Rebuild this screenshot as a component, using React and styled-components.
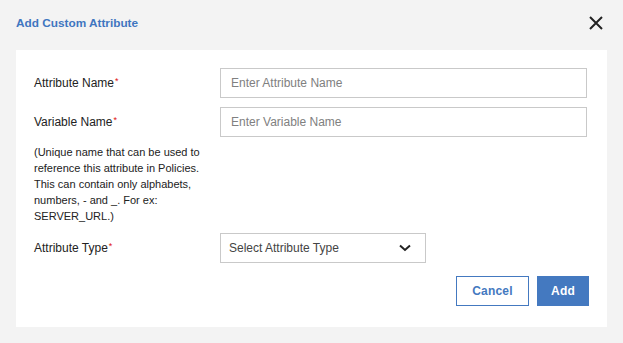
import React from "react";
import styled, { createGlobalStyle } from "styled-components";

const Global = createGlobalStyle`
  html, body { margin: 0; padding: 0; background: #f3f3f3; }
  body { font-family: "Liberation Sans", Arial, sans-serif; }
  * { box-sizing: border-box; }
`;

const Dialog = styled.div`
  width: 623px;
  min-height: 343px;
  background: #f3f3f3;
  padding: 0 16px 16px 16px;
  display: flex;
  flex-direction: column;
`;

const Header = styled.div`
  flex: none;
  height: 50px;
  display: flex;
  align-items: center;
  justify-content: space-between;
  padding-bottom: 5px;
`;

const Title = styled.h2`
  margin: 0;
  font-size: 11.8px;
  font-weight: bold;
  color: #3f76c0;
`;

const CloseButton = styled.button`
  border: 0;
  background: none;
  padding: 0;
  margin-right: 3px;
  width: 16px;
  height: 16px;
  display: flex;
  align-items: center;
  justify-content: center;
  cursor: pointer;
`;

const Panel = styled.div`
  flex: none;
  background: #fff;
  width: 591px;
  padding: 18px 20px 21px 18px;
  display: flex;
  flex-direction: column;
  gap: 9px;
`;

const Row = styled.div`
  display: flex;
  align-items: flex-start;
`;

const LabelCol = styled.div`
  width: 186px;
  flex: none;
  padding-top: 6px;
  display: flex;
  flex-direction: column;
`;

const Label = styled.label`
  font-size: 12px;
  line-height: 14px;
  color: #222;
`;

const Req = styled.span`
  color: #e01010;
  font-size: 9px;
  vertical-align: 3px;
  margin-left: 1px;
`;

const Help = styled.p`
  margin: 15px 0 0 0;
  font-size: 11px;
  line-height: 16px;
  color: #222;
  width: 180px;
`;

const Input = styled.input`
  flex: 1;
  height: 30px;
  border: 1px solid #c9c9c9;
  padding: 0 10px;
  font-family: inherit;
  font-size: 12px;
  color: #222;
  outline: none;
  &::placeholder { color: #808080; }
`;

const Select = styled.div`
  width: 206px;
  height: 30px;
  border: 1px solid #c9c9c9;
  padding: 0 14px 0 8px;
  display: flex;
  align-items: center;
  justify-content: space-between;
  font-size: 12px;
  color: #444;
`;

const Actions = styled.div`
  display: flex;
  justify-content: flex-end;
  gap: 8px;
  margin-top: 4px;
  margin-right: -2px;
`;

const Button = styled.button`
  height: 30px;
  font-family: inherit;
  font-size: 12px;
  font-weight: bold;
  letter-spacing: 0.2px;
  border: 1px solid #4479c0;
  background: ${p => (p.$primary ? "#4479c0" : "#fff")};
  color: ${p => (p.$primary ? "#fff" : "#4479c0")};
  width: ${p => p.$w}px;
  padding: 0;
  cursor: pointer;
`;

export default function App() {
  return (
    <>
      <Global />
      <Dialog>
        <Header>
          <Title>Add Custom Attribute</Title>
          <CloseButton aria-label="close">
            <svg width="14" height="14" viewBox="0 0 14 14">
              <path d="M1 1L13 13M13 1L1 13" stroke="#222" strokeWidth="2" />
            </svg>
          </CloseButton>
        </Header>
        <Panel>
          <Row>
            <LabelCol>
              <Label>Attribute Name<Req>*</Req></Label>
            </LabelCol>
            <Input placeholder="Enter Attribute Name" />
          </Row>
          <Row>
            <LabelCol>
              <Label>Variable Name<Req>*</Req></Label>
              <Help>
                (Unique name that can be used to reference this attribute in Policies.
                This can contain only alphabets, numbers, - and _. For ex: SERVER_URL.)
              </Help>
            </LabelCol>
            <Input placeholder="Enter Variable Name" />
          </Row>
          <Row>
            <LabelCol>
              <Label>Attribute Type<Req>*</Req></Label>
            </LabelCol>
            <Select>
              <span>Select Attribute Type</span>
              <svg width="12" height="8" viewBox="0 0 12 8">
                <path d="M1 1.5L6 6L11 1.5" stroke="#222" strokeWidth="2" fill="none" />
              </svg>
            </Select>
          </Row>
          <Actions>
            <Button $w={73}>Cancel</Button>
            <Button $primary $w={52}>Add</Button>
          </Actions>
        </Panel>
      </Dialog>
    </>
  );
}
